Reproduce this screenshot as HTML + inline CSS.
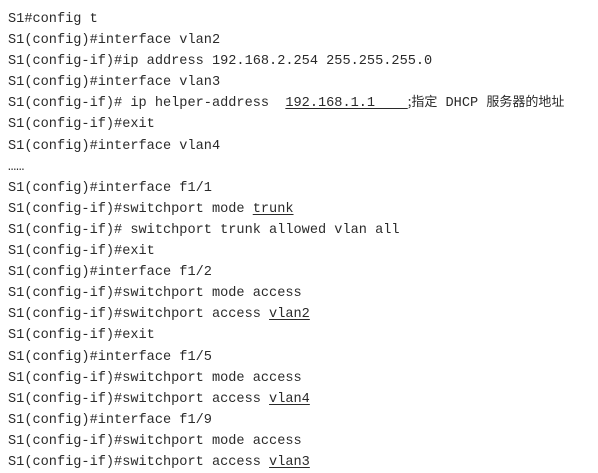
<!DOCTYPE html>
<html><head><meta charset="utf-8"><style>
body{margin:0;background:#fff;width:598px;height:470px;overflow:hidden}
.w{position:absolute;left:8px;top:9px;font-family:"Liberation Mono",monospace;font-size:13.6px;color:#2a2a2a}
.w div{height:21.1px;line-height:21.1px;white-space:pre}
u{text-decoration:underline;text-underline-offset:2px}
.c{font-family:"Noto Sans CJK SC",sans-serif;font-size:13px;line-height:1}
</style></head><body><div class="w">
<div>S1#config t</div>
<div>S1(config)#interface vlan2</div>
<div>S1(config-if)#ip address 192.168.2.254 255.255.255.0</div>
<div>S1(config)#interface vlan3</div>
<div>S1(config-if)# ip helper-address  <u>192.168.1.1    </u><span class="c">;指定</span> DHCP <span class="c">服务器的地址</span></div>
<div>S1(config-if)#exit</div>
<div>S1(config)#interface vlan4</div>
<div>……</div>
<div>S1(config)#interface f1/1</div>
<div>S1(config-if)#switchport mode <u>trunk</u></div>
<div>S1(config-if)# switchport trunk allowed vlan all</div>
<div>S1(config-if)#exit</div>
<div>S1(config)#interface f1/2</div>
<div>S1(config-if)#switchport mode access</div>
<div>S1(config-if)#switchport access <u>vlan2</u></div>
<div>S1(config-if)#exit</div>
<div>S1(config)#interface f1/5</div>
<div>S1(config-if)#switchport mode access</div>
<div>S1(config-if)#switchport access <u>vlan4</u></div>
<div>S1(config)#interface f1/9</div>
<div>S1(config-if)#switchport mode access</div>
<div>S1(config-if)#switchport access <u>vlan3</u></div>
</div></body></html>
